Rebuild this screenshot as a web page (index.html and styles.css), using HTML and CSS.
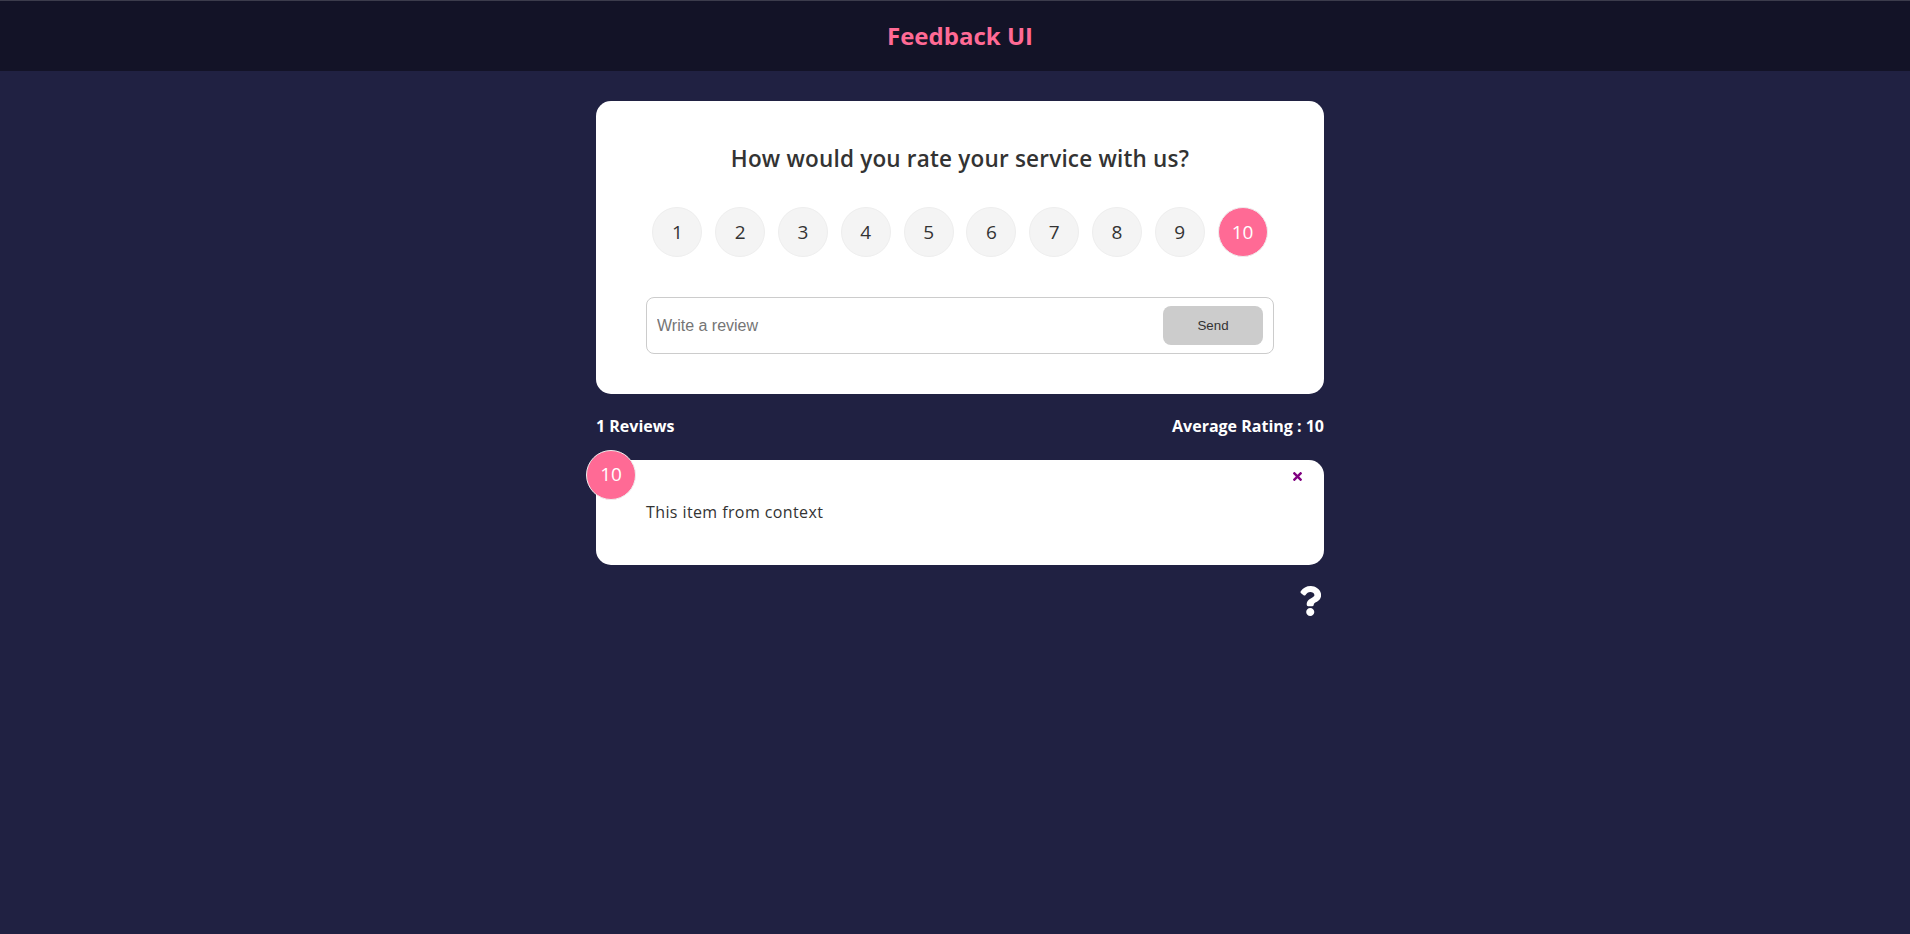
FILE: index.html
```html
<!DOCTYPE html>
<html lang="en">
<head>
<meta charset="UTF-8">
<title>Feedback UI</title>
<link rel="stylesheet" href="styles.css">
</head>
<body>
<header class="header">
  <h2 class="header-title">Feedback UI</h2>
</header>
<main class="main">
<div class="container">
  <div class="card">
    <form class="form">
      <h2 class="form-title">How would you rate your service with us?</h2>
      <ul class="rating">
        <li class="rating-item">1</li>
        <li class="rating-item">2</li>
        <li class="rating-item">3</li>
        <li class="rating-item">4</li>
        <li class="rating-item">5</li>
        <li class="rating-item">6</li>
        <li class="rating-item">7</li>
        <li class="rating-item">8</li>
        <li class="rating-item">9</li>
        <li class="rating-item selected">10</li>
      </ul>
      <div class="input-group">
        <input class="review-input" type="text" placeholder="Write a review">
        <button class="btn" type="submit" disabled>Send</button>
      </div>
    </form>
  </div>
  <div class="feedback-stats">
    <h4 class="stat">1 Reviews</h4>
    <h4 class="stat">Average Rating : 10</h4>
  </div>
  <div class="card feedback-item">
    <div class="num-display">10</div>
    <button class="close" type="button" aria-label="Delete">
      <svg class="close-icon" viewBox="0 0 352 512" width="9" height="13"><path fill="currentColor" d="M242.72 256l100.07-100.07c12.28-12.28 12.28-32.19 0-44.48l-22.24-22.24c-12.28-12.28-32.19-12.28-44.48 0L176 189.28 75.93 89.21c-12.28-12.28-32.19-12.28-44.48 0L9.21 111.450c-12.28 12.28-12.28 32.19 0 44.48L109.28 256 9.21 356.07c-12.28 12.28-12.28 32.19 0 44.48l22.240 22.24c12.28 12.28 32.2 12.28 44.48 0L176 322.72l100.07 100.07c12.28 12.28 32.2 12.28 44.48 0l22.24-22.24c12.28-12.28 12.28-32.19 0-44.48L242.72 256z"/></svg>
    </button>
    <div class="text-display">This item from context</div>
  </div>
  <div class="about-link">
    <svg class="about-icon" viewBox="0 0 384 512" width="22.5" height="30"><path fill="currentColor" d="M202.021 0C122.202 0 70.503 32.703 29.914 91.026c-7.363 10.58-5.093 25.086 5.178 32.874l43.138 32.709c10.373 7.865 25.132 6.026 33.253-4.148 25.049-31.381 43.63-49.449 82.757-49.449 30.764 0 68.816 19.799 68.816 49.631 0 22.552-18.617 34.134-48.993 51.164-35.423 19.86-82.299 44.576-82.299 106.405V320c0 13.255 10.745 24 24 24h72.471c13.255 0 24-10.745 24-24v-5.773c0-42.860 125.268-44.645 125.268-160.627C377.504 66.256 286.902 0 202.021 0zM192 373.459c-38.196 0-69.271 31.075-69.271 69.271 0 38.195 31.075 69.27 69.271 69.27s69.271-31.075 69.271-69.271-31.075-69.27-69.271-69.270z"/></svg>
  </div>
</div>
</main>
</body>
</html>
```

FILE: styles.css
```css
* {
  box-sizing: border-box;
  margin: 0;
  padding: 0;
}

body {
  font-family: "Open Sans", "Noto Sans", sans-serif;
  background-color: #202142;
  color: #fff;
  line-height: 1.6;
}

ul {
  list-style: none;
}

.header {
  height: 71px;
  display: flex;
  align-items: center;
  justify-content: center;
  padding-left: 10px;
  background-color: rgba(0, 0, 0, 0.4);
  border-top: 1px solid #3c3c4c;
}

.header-title {
  color: #ff6a95;
  font-size: 24px;
  font-weight: 700;
}

.main {
  padding-left: 10px;
}

.container {
  max-width: 768px;
  margin: 0 auto;
  padding: 0 20px;
}

.card {
  background-color: #fff;
  color: #333;
  border-radius: 15px;
  padding: 40px 50px;
  margin: 30px 0 20px;
  position: relative;
}

.form-title {
  font-size: 22.5px;
  font-weight: 600;
  text-align: center;
  line-height: 1.6;
  letter-spacing: 0.2px;
}

.rating {
  display: flex;
  align-items: center;
  justify-content: space-around;
  margin: 30px 0 40px;
}

.rating-item {
  width: 50px;
  height: 50px;
  border-radius: 50%;
  background: #f4f4f4;
  border: 1px solid #eee;
  display: flex;
  align-items: center;
  justify-content: center;
  font-size: 19px;
  color: #333;
}

.rating-item.selected {
  background: #ff6a95;
  color: #fff;
}

.input-group {
  display: flex;
  align-items: center;
  border: 1px solid #ccc;
  border-radius: 8px;
  padding: 8px 10px 8px 10px;
}

.review-input {
  flex-grow: 1;
  border: none;
  outline: none;
  font-family: "Liberation Sans", Arial, sans-serif;
  font-size: 16px;
  color: #333;
  background: transparent;
}

.review-input::placeholder {
  color: #757575;
}

.btn {
  width: 100px;
  height: 39px;
  border: 0;
  border-radius: 8px;
  background-color: #cccccc;
  color: #333;
  font-family: "Liberation Sans", Arial, sans-serif;
  font-size: 13.33px;
}

.feedback-stats {
  display: flex;
  justify-content: space-between;
  align-items: center;
  margin-top: 16px;
}

.stat {
  font-size: 16px;
  font-weight: 700;
}

.feedback-item {
  margin: 20px 0 21px;
}

.num-display {
  position: absolute;
  top: -10px;
  left: -10px;
  width: 50px;
  height: 50px;
  border-radius: 50%;
  background: #ff6a95;
  border: 1px solid #eee;
  color: #fff;
  font-size: 19px;
  display: flex;
  align-items: center;
  justify-content: center;
}

.close {
  position: absolute;
  top: 10px;
  right: 22px;
  background: none;
  border: none;
  padding: 0;
  color: purple;
  display: flex;
  cursor: pointer;
}

.close-icon {
  display: block;
}

.text-display {
  font-size: 16px;
  letter-spacing: 0.4px;
}

.about-link {
  display: flex;
  justify-content: flex-end;
  padding-right: 3px;
}

.about-icon {
  display: block;
}
```
